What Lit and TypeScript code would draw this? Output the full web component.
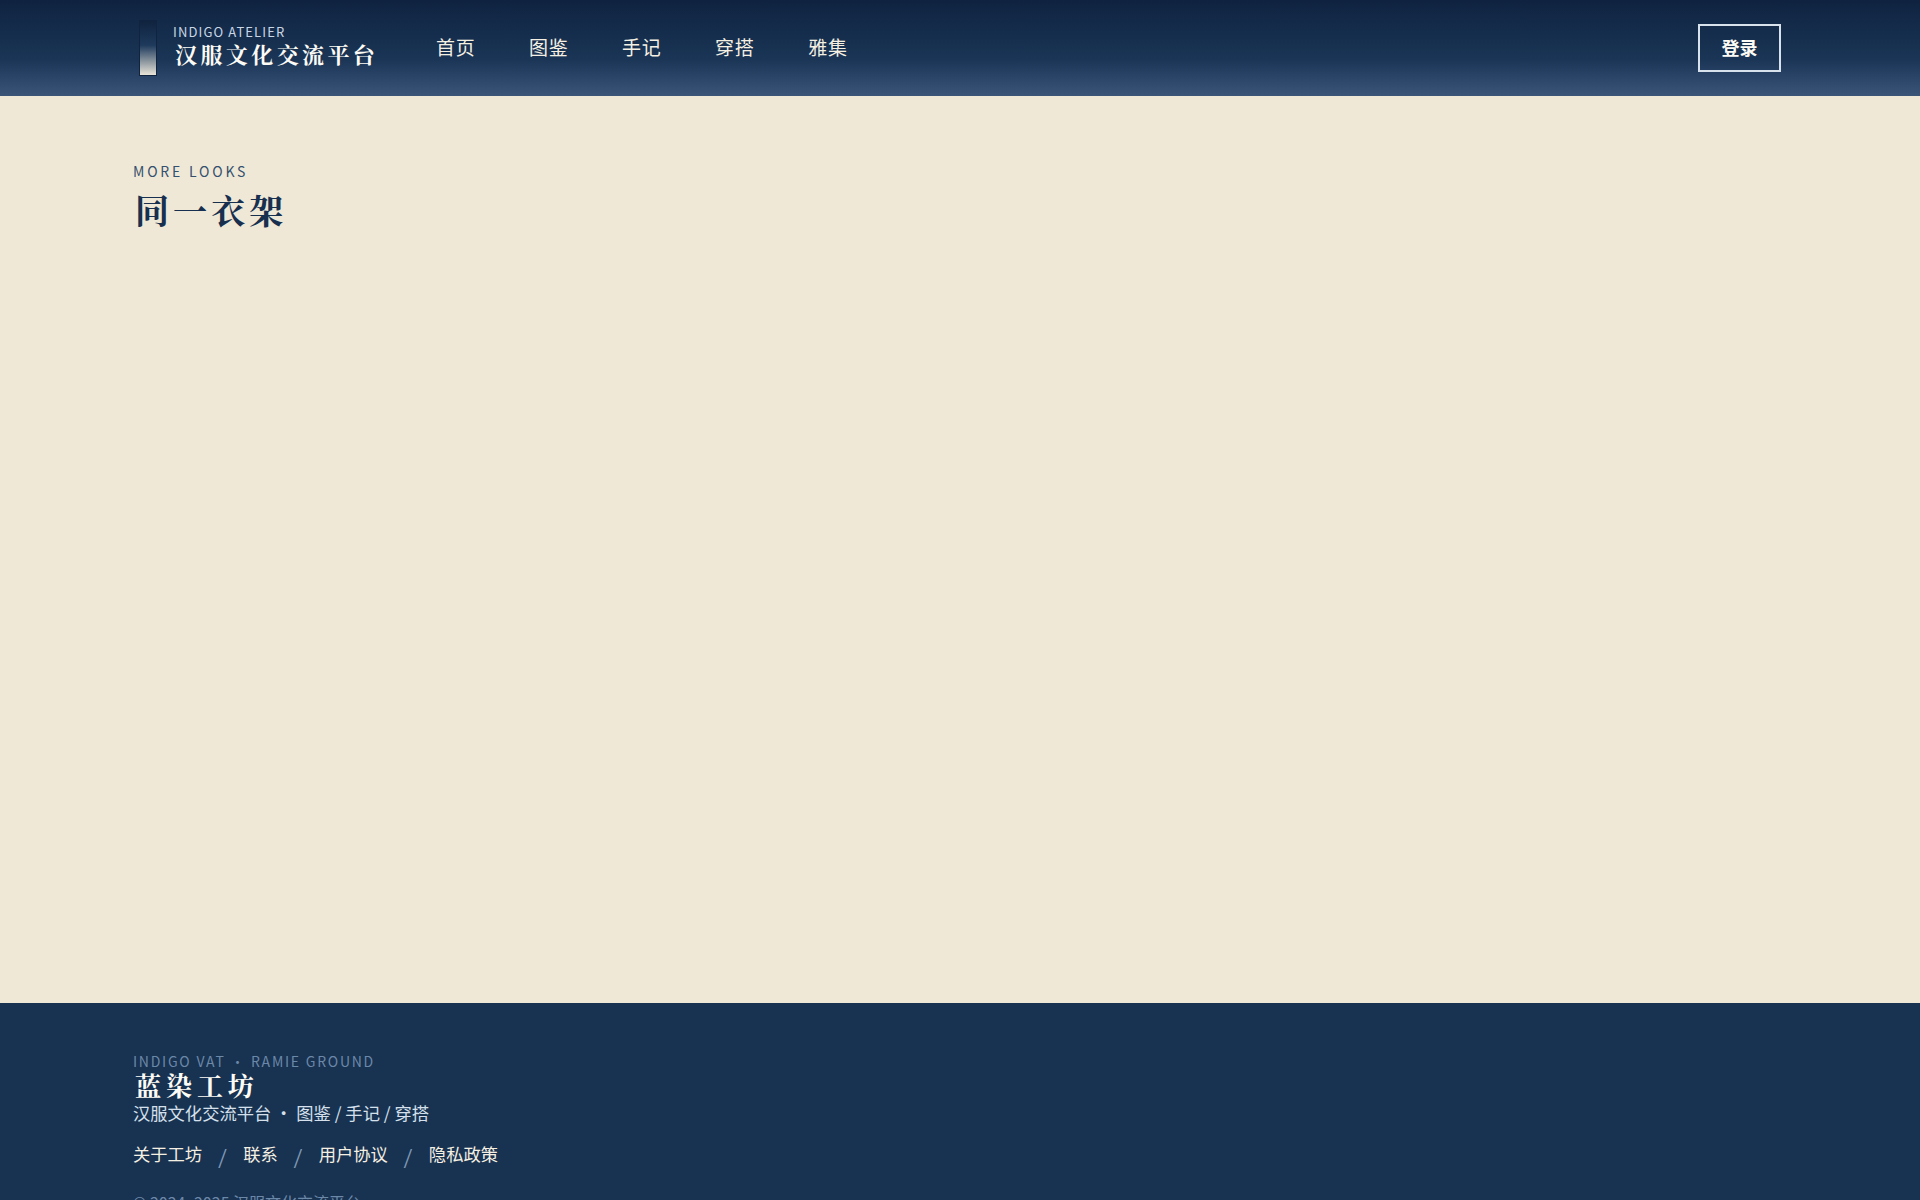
import { LitElement, html, css, unsafeCSS } from "lit";
import { customElement } from "lit/decorators.js";

const SANS = unsafeCSS(`"Noto Sans CJK SC", "Noto Sans", sans-serif`);
const DISPLAY = unsafeCSS(`"Noto Serif CJK SC", "Noto Sans CJK SC", serif`);

@customElement("app-root")
export class AppRoot extends LitElement {
  static styles = css`
    :host { display: block; height: 1200px; overflow: hidden; background: #f0e8d6; font-family: ${SANS}; }
    .top { height: 96px; box-sizing: border-box; padding: 0 139px; display: flex; align-items: center;
      background: linear-gradient(180deg, #0f2340 0%, #1a3556 62%, #3a5578 100%); }
    .brand { display: flex; align-items: center; gap: 16px; width: 297px; }
    .bar { width: 18px; height: 56px; border: 1px solid #10233f; box-sizing: border-box; background: linear-gradient(180deg, #10233f, #1e3a5c 45%, #e9e4d8); margin-top: -1px; }
    .latin { font-size: 13px; letter-spacing: 0.085em; color: #c9d6e6; line-height: 16px; margin-top: -4px; }
    .cn { font-family: ${DISPLAY}; font-size: 22px; letter-spacing: 0.155em; color: #fdfbf5; line-height: 28px; font-weight: 700; margin-left: 2px; }
    nav { display: flex; gap: 53.5px; flex: 1; margin-top: -4px; }
    nav a { color: #f5f0e2; font-size: 19px; letter-spacing: 0.04em; }
    .login { width: 83px; height: 48px; box-sizing: border-box; border: 2px solid #d8e2ec; color: #fdfbf5; font-size: 18px; font-weight: 600; display: flex; align-items: center; justify-content: center; padding-bottom: 2px; }
    main { height: 907px; box-sizing: border-box; padding: 65px 133px 0; }
    .eyebrow { font-size: 14px; letter-spacing: 0.2em; color: #34506f; line-height: 20px; }
    h2 { margin: 6px 0 0 2px; font-family: ${DISPLAY}; font-size: 34px; letter-spacing: 0.12em; color: #18304f; font-weight: 700; line-height: 46px; }
    footer { background: #183251; height: 197px; box-sizing: border-box; padding: 48px 133px 0; }
    .f1 { font-size: 14px; letter-spacing: 0.125em; color: #6c88a8; line-height: 20px; }
    .f2 { font-family: ${DISPLAY}; font-size: 26px; letter-spacing: 0.19em; color: #fdfbf5; font-weight: 700; line-height: 27px; margin-left: 2px; }
    .f3 { font-size: 17.3px; color: #d5e0ec; line-height: 28px; margin-top: 1px; }
    .links { display: flex; gap: 16px; font-size: 17.3px; color: #f5f0e2; margin-top: 9px; align-items: center; line-height: 28px; }
    .sep { color: #7f98b5; font-family: "Liberation Serif", serif; font-size: 30px; width: 9px; margin-top: 8px; }
    .copy { font-size: 16px; color: #6c88a8; margin-top: 18px; }
  `;
  render() {
    return html`
      <header class="top">
        <div class="brand"><div class="bar"></div><div><div class="latin">INDIGO ATELIER</div><div class="cn">汉服文化交流平台</div></div></div>
        <nav><a>首页</a><a>图鉴</a><a>手记</a><a>穿搭</a><a>雅集</a></nav>
        <div class="login">登录</div>
      </header>
      <main><div class="eyebrow">MORE LOOKS</div><h2>同一衣架</h2></main>
      <footer>
        <div class="f1">INDIGO VAT ・ RAMIE GROUND</div>
        <div class="f2">蓝染工坊</div>
        <div class="f3">汉服文化交流平台 ・ 图鉴 / 手记 / 穿搭</div>
        <div class="links"><span>关于工坊</span><span class="sep">/</span><span>联系</span><span class="sep">/</span><span>用户协议</span><span class="sep">/</span><span>隐私政策</span></div>
        <div class="copy">© 2024–2025 汉服文化交流平台</div>
      </footer>`;
  }
}
